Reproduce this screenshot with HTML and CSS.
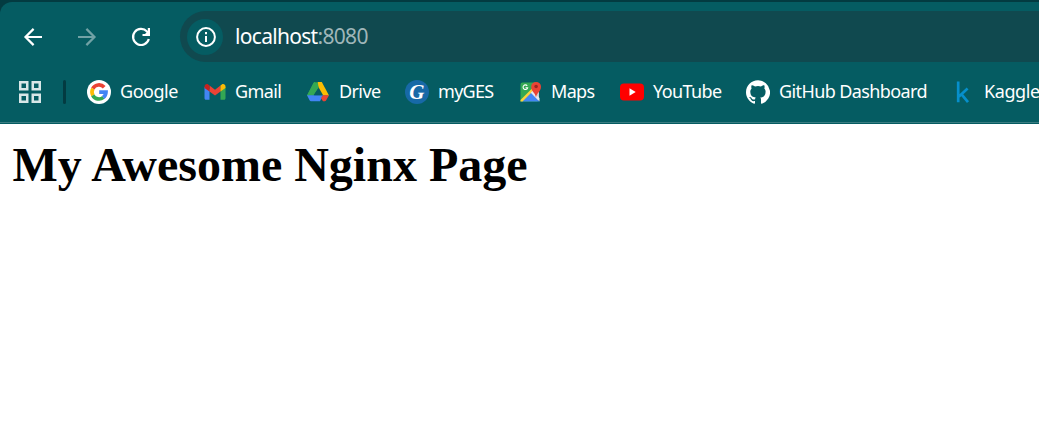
FILE: index.html
```html
<!DOCTYPE html>
<html lang="en">
<head>
<meta charset="utf-8">
<title>My Awesome Nginx Page</title>
<link rel="stylesheet" href="styles.css">
</head>
<body>
<header class="chrome">
  <div class="panel">
    <nav class="toolbar">
      <svg class="nav-icon" viewBox="0 0 24 24"><path d="M21 12H4.5M12.6 3.9L4.5 12l8.1 8.1"/></svg>
      <svg class="nav-icon disabled" viewBox="0 0 24 24"><path d="M3 12h16.5M11.4 3.9l8.1 8.1-8.1 8.1"/></svg>
      <svg class="nav-icon" viewBox="0 0 24 24"><path d="M19.8 14A8 8 0 1 1 18 6.6L20 8.6"/><path class="solid" d="M21 3v8h-7.5V9H16l2.8-2.8V3z"/></svg>
      <div class="omnibox">
        <span class="info"><svg class="info-icon" viewBox="0 0 20 20"><circle cx="10" cy="10" r="8.9"/><path d="M10 9v6M10 5v2.2"/></svg></span>
        <span class="url">localhost<span class="port">:8080</span></span>
      </div>
    </nav>
    <nav class="bookmarks">
      <svg class="apps" viewBox="0 0 22 22"><path d="M1.25 1.25h7v7h-7zM13.75 1.25h7v7h-7zM1.25 13.75h7v7h-7zM13.75 13.75h7v7h-7z"/></svg>
      <span class="divider"></span>
      <a class="bookmark google"><svg class="icon" viewBox="0 0 24 24"><circle cx="12" cy="12" r="12" fill="#fff"/><g fill="none" stroke-width="3.7"><path d="M17.2 7.3A7 7 0 0 0 5.8 8.7" stroke="#ea4335"/><path d="M5.9 8.6a7 7 0 0 0 0 6.8" stroke="#fbbc05"/><path d="M5.8 15.3a7 7 0 0 0 10.6 2.1" stroke="#34a853"/><path d="M16.2 17.6A7 7 0 0 0 19 12.2h-6.8" stroke="#4285f4"/></g></svg><span class="label">Google</span></a>
      <a class="bookmark gmail"><svg class="icon" viewBox="0 0 24 24"><path d="M1.5 7v11.3c0 .9.6 1.5 1.5 1.5h3.5V9z" fill="#4285f4"/><path d="M17.5 9v10.8H21c.9 0 1.5-.6 1.5-1.5V7z" fill="#34a853"/><path d="M6.5 5.6l5.5 4.2 5.5-4.2v5.8L12 15.6l-5.5-4.2z" fill="#ea4335"/><path d="M1.5 9.8V6.5C1.5 4.2 3.8 3.4 5.2 4.4l1.3 1v6.1L1.5 8z" fill="#c5221f"/><path d="M22.5 8V6.5c0-2.3-2.3-3.1-3.7-2.1l-1.3 1v6.1z" fill="#fbbc04"/></svg><span class="label">Gmail</span></a>
      <a class="bookmark drive"><svg class="icon" viewBox="0 0 24 24"><path d="M8.4 2h3.8v6.4L6.2 15.5H1z" fill="#34a853"/><path d="M9 2h6.2L12 8.4z" fill="#188038"/><path d="M12 2h3.8L23 15.4h-5.8L10.8 4z" fill="#fbbc04"/><path d="M7.6 2.6h4.2l.8 4.8-5.2 8.1H1z" fill="#34a853"/><path d="M1 15.3h16l-3 6H5.5C4.5 21.3 4 21 3.6 20.2z" fill="#4285f4"/><path d="M16.8 15.3H23l-2.8 5c-.5.8-1 1-2 1h-1.2l-2-3z" fill="#ea4335"/><path d="M12 8.4l-3.9 6.9h7.8z" fill="#055c62"/></svg><span class="label">Drive</span></a>
      <a class="bookmark myges"><svg class="icon" viewBox="0 0 24 24"><circle cx="12" cy="12" r="12" fill="#1769a7"/><text class="ges-letter" x="11.8" y="19.2" text-anchor="middle">G</text></svg><span class="label">myGES</span></a>
      <a class="bookmark maps"><svg class="icon" viewBox="0 0 24 24"><path d="M3.5 2.5h15v19h-17v-17a2 2 0 0 1 2-2z" fill="#34a853"/><path d="M11.5 12.8l8.5-8v15l-2 .2z" fill="#c8cbd0"/><path d="M12 12.5l-9 9h17.5z" fill="#4285f4"/><path d="M1.5 20l14-14 1.5 2L3.5 21.5h-2z" fill="#fbd23c"/><path d="M13.5 11l7 7v3.5l-8.7-8.8z" fill="#e7e9ed"/><path d="M17 17.5c-.5-4.5-4.8-6-4.8-10.7a4.9 4.9 0 0 1 9.8 0c0 4.7-4.4 6.2-5 10.7z" fill="#ea4335"/><circle cx="17.1" cy="6.5" r="1.8" fill="#9d2520"/><path d="M8.2 5.8a2.3 2.3 0 1 0 .4 2H6.5" fill="none" stroke="#fff" stroke-width="1.1"/></svg><span class="label">Maps</span></a>
      <a class="bookmark youtube"><svg class="icon" viewBox="0 0 24 24"><rect y="3.5" width="24" height="17" rx="4" fill="#f00"/><path d="M9.5 8.3v7.4l6.2-3.7z" fill="#fff"/></svg><span class="label">YouTube</span></a>
      <a class="bookmark github"><svg class="icon" viewBox="0 0 24 24"><path fill="#fff" d="M12 .3C5.4.3 0 5.7 0 12.3c0 5.3 3.4 9.8 8.2 11.4.6.1.8-.3.8-.6v-2c-3.3.7-4-1.6-4-1.6-.6-1.4-1.4-1.8-1.4-1.8-1-.7.1-.7.1-.7 1.2 0 1.9 1.2 1.9 1.2 1 1.8 2.8 1.3 3.5 1 0-.8.4-1.3.7-1.6-2.7-.3-5.5-1.3-5.5-6 0-1.2.5-2.3 1.3-3.1-.2-.4-.6-1.6 0-3.2 0 0 1-.3 3.4 1.2a11.5 11.5 0 0 1 6 0c2.3-1.5 3.3-1.2 3.3-1.2.6 1.6.2 2.8 0 3.2.9.8 1.3 1.9 1.3 3.2 0 4.6-2.8 5.6-5.5 5.9.5.4.9 1 .9 2.2v3.3c0 .3.1.7.8.6A12 12 0 0 0 12 .3z"/></svg><span class="label">GitHub Dashboard</span></a>
      <a class="bookmark kaggle"><svg class="icon" viewBox="0 0 24 24"><path d="M7.2 1.5v20.8M16.6 8.6L8 16.4M10.4 14.2l6.6 8" fill="none" stroke="#068fcb" stroke-width="2.7"/></svg><span class="label">Kaggle</span></a>
    </nav>
  </div>
</header>
<main class="page"><h1>My Awesome Nginx Page</h1></main>
</body>
</html>
```
FILE: styles.css
```css
* { box-sizing: border-box; }
body { margin: 0; background: #fff; overflow: hidden; }
.chrome { height: 124px; padding-top: 2px; background: #033b41; overflow: hidden; }
.panel {
  height: 122px;
  padding-top: 9px;
  border-radius: 12px 0 0 0;
  background: linear-gradient(#3b7c81, #3b7c81) 0 120px / 100% 1px no-repeat #055c62;
  font-family: "Noto Sans", "Open Sans", sans-serif;
  color: #fff;
}
.toolbar { display: flex; align-items: center; height: 51px; padding-left: 21px; gap: 30px; }
.nav-icon { flex: none; width: 24px; height: 24px; margin-top: 1px; fill: none; stroke: #fff; stroke-width: 2.2; }
.solid { fill: #fff; stroke: none; }
.disabled { opacity: .43; }
.omnibox {
  flex: 1;
  display: flex;
  align-items: center;
  gap: 12px;
  height: 51px;
  margin-left: -3px;
  padding-left: 7px;
  border-radius: 26px 0 0 26px;
  background: #10494f;
}
.info { display: grid; place-items: center; width: 36px; height: 36px; border-radius: 50%; background: #055c62; }
.info-icon { width: 20px; height: 20px; margin-left: 1px; fill: none; stroke: #fff; stroke-width: 2; }
.url { padding-bottom: 1px; font-size: 21px; line-height: 28px; letter-spacing: -.69px; }
.port { color: #9fb6b9; }
.bookmarks { display: flex; align-items: center; height: 60px; padding-left: 19px; font-size: 18px; line-height: 24px; white-space: nowrap; }
.apps { flex: none; width: 22px; height: 22px; fill: none; stroke: #d9e7e8; stroke-width: 2.5; }
.divider { flex: none; width: 3px; height: 24px; margin: 0 21px 0 22px; border-radius: 2px; background: #033b41; }
.bookmark { flex: none; display: flex; align-items: center; gap: 9px; }
.label { padding-bottom: 2px; }
.icon { flex: none; width: 24px; height: 24px; }
.google { width: 116px; letter-spacing: -.46px; }
.gmail { width: 103px; gap: 8px; letter-spacing: -.6px; }
.drive { width: 99px; letter-spacing: -.6px; }
.myges { width: 114px; letter-spacing: -.7px; }
.maps { width: 101px; gap: 8px; letter-spacing: -.7px; }
.youtube { width: 126px; letter-spacing: -.6px; }
.github { width: 205px; letter-spacing: -.6px; }
.kaggle { letter-spacing: -.4px; }
.ges-letter { font: italic bold 21px "Liberation Serif", serif; fill: #fff; letter-spacing: 0; }
.page { padding: 13px 12px 13px 12.5px; }
h1 { margin: 0; font: bold 48px/55px "Liberation Serif", "Times New Roman", serif; color: #000; }
```
